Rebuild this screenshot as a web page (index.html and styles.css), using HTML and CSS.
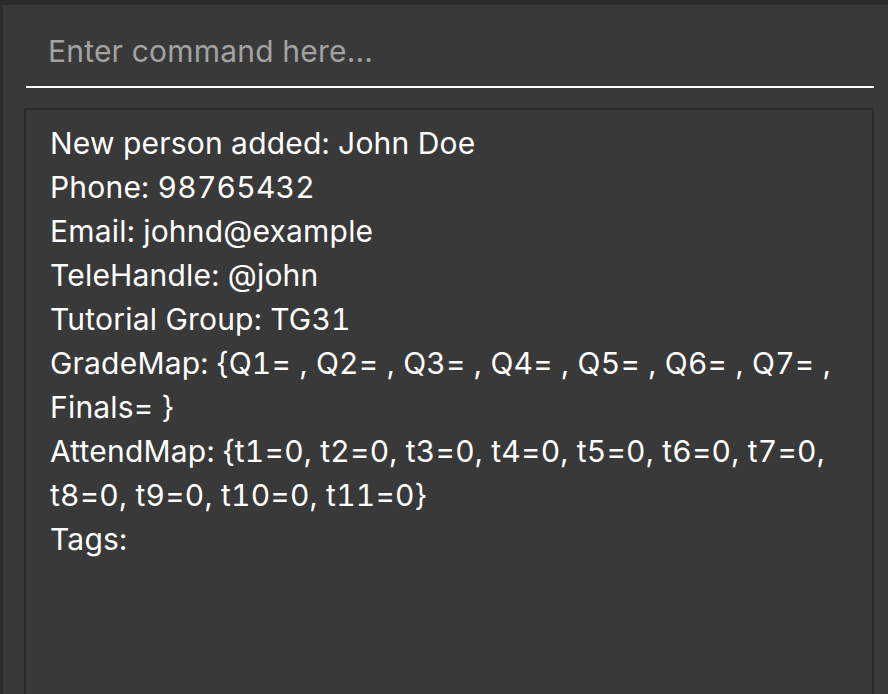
FILE: index.html
```html
<!DOCTYPE html>
<html>
<head>
<meta charset="utf-8">
<link rel="stylesheet" href="styles.css">
</head>
<body>
<div class="app">
  <input class="command" type="text" placeholder="Enter command here...">
  <div class="result">
    <div class="line">New person added: John Doe</div>
    <div class="line">Phone: 98765432</div>
    <div class="line">Email: johnd@example</div>
    <div class="line">TeleHandle: @john</div>
    <div class="line">Tutorial Group: TG31</div>
    <div class="line">GradeMap: {Q1= , Q2= , Q3= , Q4= , Q5= , Q6= , Q7= ,</div>
    <div class="line">Finals= }</div>
    <div class="line">AttendMap: {t1=0, t2=0, t3=0, t4=0, t5=0, t6=0, t7=0,</div>
    <div class="line">t8=0, t9=0, t10=0, t11=0}</div>
    <div class="line">Tags:</div>
  </div>
</div>
</body>
</html>
```
FILE: styles.css
```css
html, body {
  margin: 0;
  padding: 0;
  background: #2b2b2b;
  height: 100%;
  overflow: hidden;
}
.app {
  margin: 5px 0 0 3px;
  height: 689px;
  background: #393939;
  box-sizing: border-box;
  padding: 11px 14px 0 0;
  display: flex;
  flex-direction: column;
  font-family: Inter, "Liberation Sans", sans-serif;
}
.command {
  margin-left: 23px;
  height: 72px;
  box-sizing: border-box;
  border: none;
  border-bottom: 2px solid #ffffff;
  background: transparent;
  outline: none;
  padding: 0 0 0 22px;
  font-family: Inter, "Liberation Sans", sans-serif;
  font-size: 30px;
  letter-spacing: 0.2px;
  color: #ffffff;
}
.command::placeholder {
  color: #a3a3a3;
  opacity: 1;
}
.result {
  margin: 20px 0 0 21px;
  flex: 1;
  border: 2px solid #2b2b2b;
  border-bottom: none;
  padding: 11px 24px 0 24px;
  color: #ffffff;
  font-size: 30px;
  letter-spacing: 0.2px;
  font-variant-numeric: tabular-nums;
  line-height: 44px;
}
```
